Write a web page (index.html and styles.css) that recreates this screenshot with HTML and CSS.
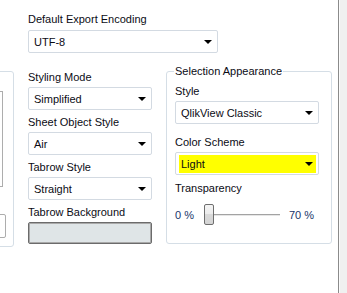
FILE: index.html
```html
<!DOCTYPE html>
<html lang="en">
<head>
  <meta charset="UTF-8">
  <title>Document Properties</title>
  <link rel="stylesheet" href="styles.css">
</head>
<body>
  <div class="page">
    <div class="panel">
      <div class="field top-field">
        <label class="label">Default Export Encoding</label>
        <div class="select wide">UTF-8<span class="arrow"></span></div>
      </div>

      <div class="row">
        <div class="group left-group">
          <div class="list"></div>
          <div class="side-btn"></div>
        </div>

        <div class="column">
          <label class="label first">Styling Mode</label>
          <div class="select">Simplified<span class="arrow"></span></div>
          <label class="label">Sheet Object Style</label>
          <div class="select">Air<span class="arrow"></span></div>
          <label class="label">Tabrow Style</label>
          <div class="select">Straight<span class="arrow"></span></div>
          <label class="label">Tabrow Background</label>
          <div class="swatch"></div>
        </div>

        <fieldset class="group selection">
          <legend>Selection Appearance</legend>
          <label class="label first">Style</label>
          <div class="select">QlikView Classic<span class="arrow"></span></div>
          <label class="label spaced">Color Scheme</label>
          <div class="select highlight"><span class="fill">Light<span class="arrow"></span></span></div>
          <label class="label transp">Transparency</label>
          <div class="slider">
            <span class="tick-label">0 %</span>
            <span class="thumb"></span>
            <span class="track"></span>
            <span class="tick-label end">70 %</span>
          </div>
        </fieldset>
      </div>
    </div>
    <div class="scroll-strip"></div>
  </div>
</body>
</html>
```

FILE: styles.css
```css
* {
  margin: 0;
  padding: 0;
  box-sizing: border-box;
}

body {
  width: 347px;
  height: 293px;
  overflow: hidden;
  background: #fff;
  font-family: "Liberation Sans", Arial, sans-serif;
  font-size: 11px;
  line-height: 14px;
  color: #0b0b14;
}

.page {
  display: flex;
  height: 293px;
}

.panel {
  width: 338px;
  overflow: hidden;
}

.scroll-strip {
  flex: 1;
  border-left: 1px solid #8b8b8b;
  box-shadow: inset 1px 0 0 #fbfbfb;
  background: #f0f0f0;
}

.label {
  display: block;
  margin-top: 5px;
  margin-bottom: 3px;
  white-space: nowrap;
}

.label.first {
  margin-top: 0;
}

.top-field {
  padding: 12px 0 0 28px;
}

.top-field .label {
  margin: 0 0 4px;
}

.select {
  position: relative;
  height: 23px;
  width: 124px;
  padding: 0 5px;
  display: flex;
  align-items: center;
  border: 1px solid #d3dae2;
  border-radius: 2px;
  background: #fff;
  white-space: nowrap;
}

.select.wide {
  width: 190px;
}

.arrow {
  position: absolute;
  right: 5px;
  top: 9px;
  width: 0;
  height: 0;
  border-left: 4px solid transparent;
  border-right: 4px solid transparent;
  border-top: 4px solid #000;
}

.row {
  display: flex;
  align-items: flex-start;
  margin-top: 11px;
}

.group {
  border: 1px solid #d5dee6;
  border-radius: 3px;
}

.left-group {
  width: 41px;
  height: 176px;
  margin-left: -27px;
  margin-top: 7px;
  padding-top: 19px;
}

.list {
  width: 29px;
  height: 96px;
  border: 1px solid #adadad;
}

.side-btn {
  width: 32px;
  height: 24px;
  margin-top: 27px;
  border: 1px solid #adadad;
  border-radius: 2px;
}

.column {
  width: 124px;
  margin-left: 14px;
  padding-top: 6px;
}

.swatch {
  width: 124px;
  height: 22px;
  border: 1px solid #6b6b6b;
  border-radius: 2px;
  box-shadow: inset 0 0 0 1px #a9a9a9;
  background: #dfe5e7;
}

.selection {
  width: 166px;
  height: 180px;
  margin-left: 14px;
  padding: 6px 12px 0 8px;
}

.selection legend {
  padding: 0 1px;
  margin-left: -1px;
  line-height: 14px;
}

.selection .select {
  width: 144px;
}

.label.spaced {
  margin-top: 11px;
}

.label.transp {
  margin-top: 6px;
}

.select.highlight {
  padding: 2px 2px 1px 3px;
  align-items: stretch;
}

.fill {
  position: relative;
  flex: 1;
  display: flex;
  align-items: center;
  padding-left: 2px;
  background: #ffff00;
}

.fill .arrow {
  right: 3px;
  top: 7px;
}

.slider {
  display: flex;
  align-items: center;
  height: 21px;
  margin-top: 9px;
  color: #17346a;
}

.tick-label {
  width: 29px;
}

.tick-label.end {
  width: auto;
  margin-left: 9px;
}

.thumb {
  width: 10px;
  height: 21px;
  border: 1px solid #6e6e6e;
  border-radius: 2px;
  background: linear-gradient(#f4f4f4 0%, #ececec 45%, #d9d9d9 50%, #d4d4d4 100%);
}

.track {
  width: 66px;
  height: 2px;
  border-top: 1px solid #a3a3a3;
  border-bottom: 1px solid #e6e6e6;
}
```
